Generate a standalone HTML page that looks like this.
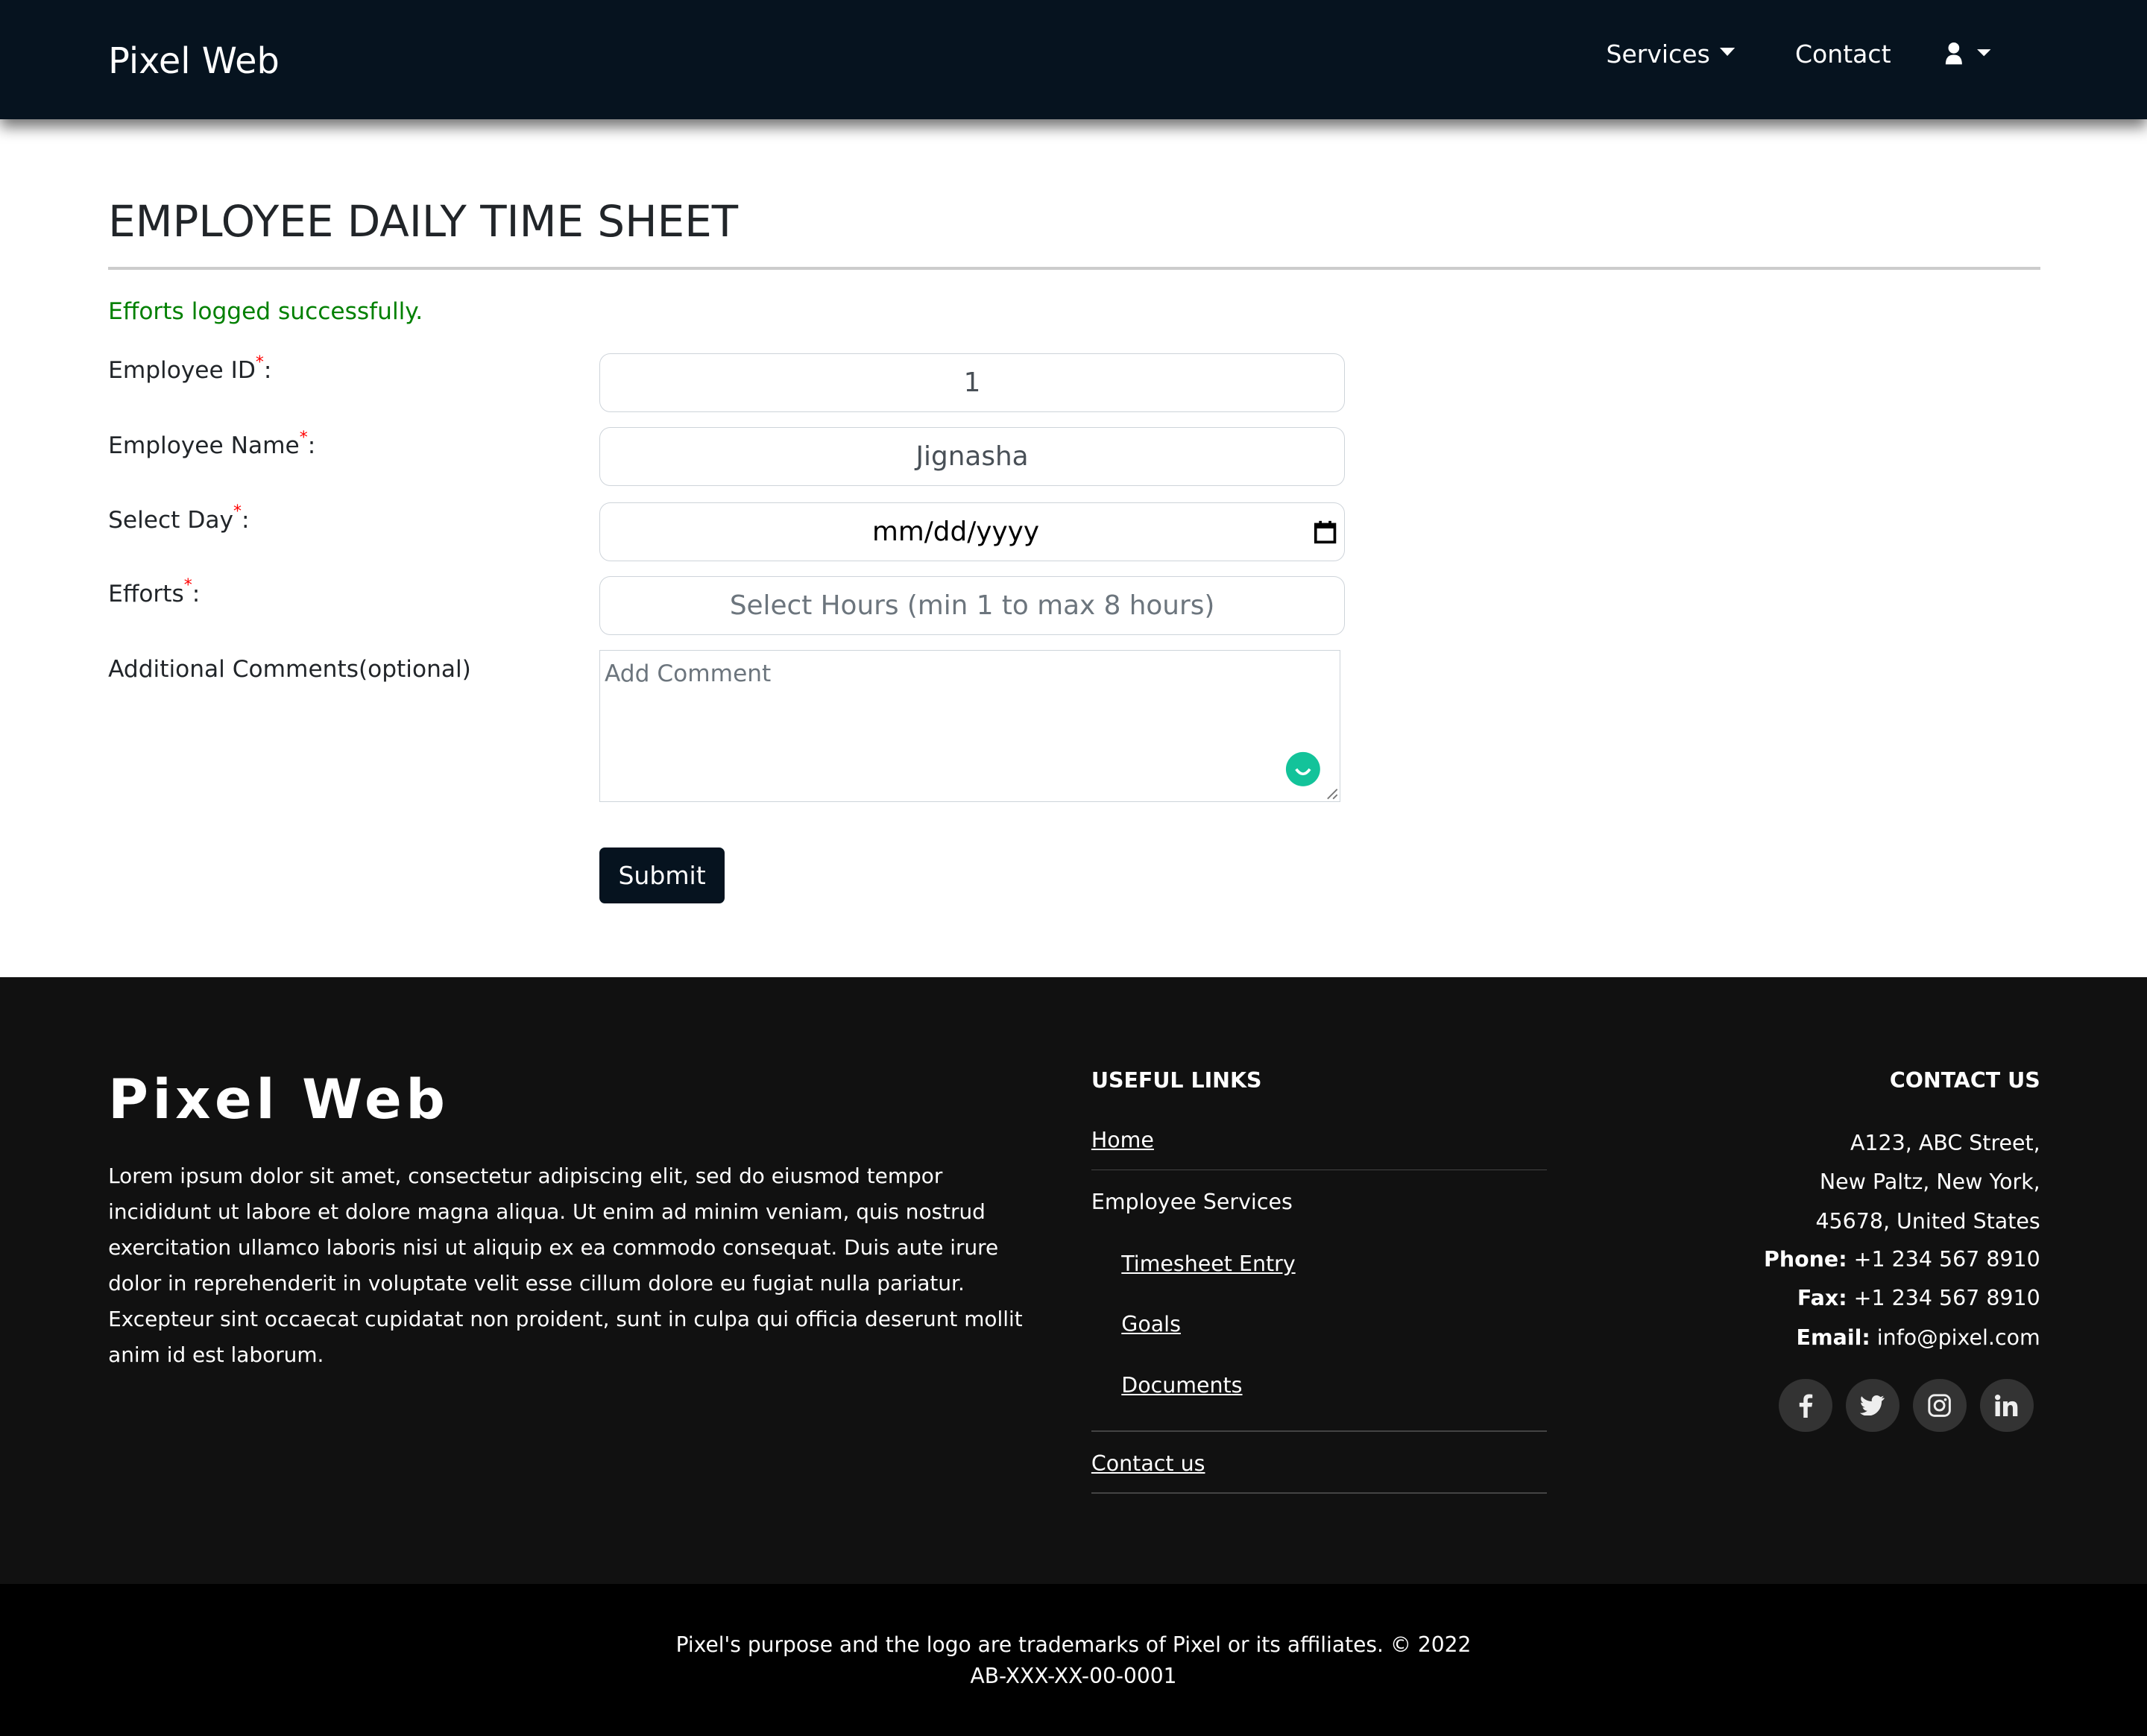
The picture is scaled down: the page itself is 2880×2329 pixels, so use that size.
<!DOCTYPE html>
<html><head><meta charset="utf-8">
<style>
html{zoom:1.83673}
*{box-sizing:border-box;margin:0;padding:0}
body{width:1568px;height:1267px;font-family:"DejaVu Sans","Liberation Sans",sans-serif;color:#212529;background:#fff;overflow:hidden;position:relative}
.abs{position:absolute;white-space:nowrap}
nav{position:absolute;left:0;top:0;width:1568px;height:87px;background:#06131f;box-shadow:0 6px 10px rgba(0,0,0,.55);z-index:2}
nav .abs{color:#fff}
.lbl{font-size:17px;left:79px}
.req{color:red;font-size:12px;vertical-align:top;position:relative;top:-3px}
.inp{position:absolute;left:438px;width:544px;height:43px;border:1px solid #ced4da;border-radius:8px;text-align:center;line-height:43px;font-size:19.5px;color:#495057}
footer{position:absolute;left:0;top:714px;width:1568px;height:443px;background:#111;color:#fff}
footer .abs{color:#fff}
.fl{font-size:15.5px;text-decoration:underline}
.hr{position:absolute;left:797px;width:333px;height:1px;background:#444}
.ci{position:absolute;font-size:15.5px;right:78px;text-align:right}
.soc{position:absolute;top:293px;width:39px;height:39px;border-radius:50%;background:#333;display:flex;align-items:center;justify-content:center}
</style></head><body>
<nav>
<div class="abs" style="left:79px;top:30px;font-size:26px">Pixel Web</div>
<div class="abs" style="left:1173px;top:29px;font-size:18px">Services</div>
<svg class="abs" style="left:1256px;top:35px" width="11" height="7" viewBox="0 0 11 7"><path d="M0 0H11L5.5 6Z" fill="#fff"/></svg>
<div class="abs" style="left:1311px;top:29px;font-size:18px">Contact</div>
<svg class="abs" style="left:1420px;top:31px" width="38" height="17" viewBox="0 0 38 17"><circle cx="7" cy="4" r="4" fill="#fff"/><path d="M1 16 Q1 9 7 9 Q13 9 13 16Z" fill="#fff"/><path d="M24 5 L34 5 L29 10Z" fill="#fff"/></svg>
</nav>
<div class="abs" style="left:79px;top:143px;font-size:31.5px">EMPLOYEE DAILY TIME SHEET</div>
<div style="position:absolute;left:79px;top:195px;width:1411px;height:2px;background:#ccc"></div>
<div class="abs" style="left:79px;top:218px;font-size:17px;color:#008000">Efforts logged successfully.</div>
<div class="abs lbl" style="top:261px">Employee ID<span class="req">*</span>:</div>
<div class="abs lbl" style="top:316px">Employee Name<span class="req">*</span>:</div>
<div class="abs lbl" style="top:370px">Select Day<span class="req">*</span>:</div>
<div class="abs lbl" style="top:424px">Efforts<span class="req">*</span>:</div>
<div class="abs lbl" style="top:479px">Additional Comments(optional)</div>
<div class="inp" style="top:258px">1</div>
<div class="inp" style="top:312px">Jignasha</div>
<div class="inp" style="top:367px;color:#000;padding-right:24px">mm/dd/yyyy
<svg style="position:absolute;right:5px;top:12px" width="17" height="18" viewBox="0 0 17 18"><rect x="1.5" y="3.5" width="14" height="13" fill="none" stroke="#000" stroke-width="2"/><rect x="1.5" y="3.5" width="14" height="3" fill="#000"/><rect x="4" y="1" width="2" height="3" fill="#000"/><rect x="11" y="1" width="2" height="3" fill="#000"/></svg></div>
<div class="inp" style="top:421px;color:#6c757d">Select Hours (min 1 to max 8 hours)</div>
<div style="position:absolute;left:438px;top:475px;width:541px;height:111px;border:1px solid #ced4da">
<div class="abs" style="left:3px;top:7px;font-size:17px;color:#6c757d">Add Comment</div>
<svg style="position:absolute;left:500px;top:73px" width="26" height="26" viewBox="0 0 26 26"><circle cx="13" cy="13" r="12.5" fill="#13c39a"/><path d="M8 13 Q13 20 18 13" fill="none" stroke="#fff" stroke-width="2"/></svg>
<svg style="position:absolute;right:1px;bottom:1px" width="9" height="9" viewBox="0 0 9 9"><path d="M1 8L8 1M5 8L8 5" stroke="#777" stroke-width="1"/></svg>
</div>
<div style="position:absolute;left:438px;top:619px;width:91px;height:41px;background:#06131f;border-radius:4px;color:#fff;font-size:18px;text-align:center;line-height:41px">Submit</div>
<footer>
<div class="abs" style="left:79px;top:66px;font-size:40px;font-weight:bold;letter-spacing:3px">Pixel Web</div>
<div style="position:absolute;left:79px;top:132px;width:680px;font-size:15.2px;line-height:26.2px;color:#fff">Lorem ipsum dolor sit amet, consectetur adipiscing elit, sed do eiusmod tempor incididunt ut labore et dolore magna aliqua. Ut enim ad minim veniam, quis nostrud exercitation ullamco laboris nisi ut aliquip ex ea commodo consequat. Duis aute irure dolor in reprehenderit in voluptate velit esse cillum dolore eu fugiat nulla pariatur. Excepteur sint occaecat cupidatat non proident, sunt in culpa qui officia deserunt mollit anim id est laborum.</div>
<div class="abs" style="left:797px;top:66px;font-size:15.5px;font-weight:bold">USEFUL LINKS</div>
<div class="abs fl" style="left:797px;top:110px">Home</div>
<div class="hr" style="top:140px"></div>
<div class="abs" style="left:797px;top:155px;font-size:15.5px">Employee Services</div>
<div class="abs fl" style="left:819px;top:200px">Timesheet Entry</div>
<div class="abs fl" style="left:819px;top:244px">Goals</div>
<div class="abs fl" style="left:819px;top:289px">Documents</div>
<div class="hr" style="top:331px"></div>
<div class="abs fl" style="left:797px;top:346px">Contact us</div>
<div class="hr" style="top:376px"></div>
<div class="ci" style="top:66px;font-weight:bold">CONTACT US</div>
<div class="ci" style="top:112px">A123, ABC Street,</div>
<div class="ci" style="top:140px">New Paltz, New York,</div>
<div class="ci" style="top:169px">45678, United States</div>
<div class="ci" style="top:197px"><b>Phone:</b> +1 234 567 8910</div>
<div class="ci" style="top:225px"><b>Fax:</b> +1 234 567 8910</div>
<div class="ci" style="top:254px"><b>Email:</b> info@pixel.com</div>
<div class="soc" style="left:1299px"><svg width="12" height="18" viewBox="0 0 12 18"><path d="M7.5 18V10H10.5L11 7H7.5V5.2C7.5 4.3 7.8 3.6 9 3.6H11V1C10.5 .9 9.5 .8 8.4 .8 6 .8 4.5 2.2 4.5 4.8V7H1.5V10H4.5V18Z" fill="#eee"/></svg></div>
<div class="soc" style="left:1348px"><svg width="18" height="15" viewBox="0 0 24 20"><path d="M23.6 2.3c-.9.4-1.8.6-2.8.8 1-.6 1.8-1.5 2.1-2.7-.9.6-2 1-3.1 1.2C18.9.6 17.6 0 16.2 0c-2.7 0-4.8 2.200-4.8 4.8 0 .4 0 .8.1 1.1C7.4 5.7 3.9 3.8 1.6.9 1.1 1.6.9 2.5.9 3.4c0 1.7.9 3.2 2.2 4-.8 0-1.5-.2-2.2-.6v.1c0 2.3 1.7 4.3 3.9 4.7-.4.1-.8.2-1.3.2-.3 0-.6 0-.9-.1.6 1.9 2.4 3.3 4.500 3.4-1.7 1.3-3.7 2.1-6 2.1-.4 0-.8 0-1.1-.1C2.1 19.2 4.6 20 7.4 20c8.9 0 13.7-7.4 13.7-13.7v-.6c.9-.7 1.8-1.5 2.5-2.4z" fill="#eee"/></svg></div>
<div class="soc" style="left:1397px"><svg width="17" height="17" viewBox="0 0 17 17"><rect x="1" y="1" width="15" height="15" rx="4" fill="none" stroke="#eee" stroke-width="1.6"/><circle cx="8.5" cy="8.5" r="3.5" fill="none" stroke="#eee" stroke-width="1.6"/><circle cx="12.8" cy="4.2" r="1" fill="#eee"/></svg></div>
<div class="soc" style="left:1446px"><svg width="17" height="16" viewBox="0 0 17 16"><circle cx="2" cy="2" r="2" fill="#eee"/><rect x=".3" y="5" width="3.4" height="11" fill="#eee"/><path d="M6 5H9.2V6.6C9.8 5.6 11 4.8 12.6 4.8 15.6 4.8 16.5 6.6 16.5 9.6V16H13.1V10.3C13.1 8.8 12.8 7.6 11.4 7.6 10 7.6 9.4 8.6 9.4 10.3V16H6Z" fill="#eee"/></svg></div>
</footer>
<div style="position:absolute;left:0;top:1157px;width:1568px;height:111px;background:#000;color:#fff;text-align:center;font-size:15.3px;line-height:23px;padding-top:33px">Pixel's purpose and the logo are trademarks of Pixel or its affiliates. © 2022<br>AB-XXX-XX-00-0001</div>
</body></html>
